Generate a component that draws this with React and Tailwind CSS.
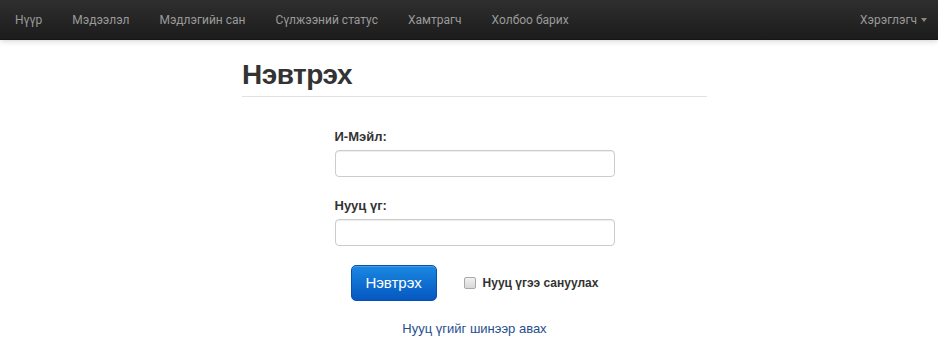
import React from "react";

const navItems = [
	"Нүүр",
	"Мэдээлэл",
	"Мэдлэгийн сан",
	"Сүлжээний статус",
	"Хамтрагч",
	"Холбоо барих",
];

function Navbar() {
	return (
		<div className="h-[40px] flex items-center justify-between bg-gradient-to-b from-[#2f2f2f] to-[#1c1c1c] border-b border-[#161616] shadow-[0_1px_6px_rgba(0,0,0,0.18)] font-['Roboto',sans-serif] text-[12px] text-[#9a9a9a]">
			<ul className="flex h-full items-center">
				{navItems.map((item) => (
					<li key={item} className="px-[15px] leading-[40px]">
						{item}
					</li>
				))}
			</ul>
			<div className="flex items-center pr-[11px]">
				<span>Хэрэглэгч</span>
				{/* caret */}
				<span className="ml-[4px] w-0 h-0 border-l-[3px] border-r-[3px] border-t-[4px] border-l-transparent border-r-transparent border-t-[#888] mt-[1px]" />
			</div>
		</div>
	);
}

function LoginForm() {
	return (
		<div className="w-[280px] mx-auto mt-[30px]">
			<label className="block text-[13px] leading-[20px] font-bold text-[#333] mb-[3px]">
				И-Мэйл:
			</label>
			<input
				type="text"
				className="block w-[280px] h-[27px] border border-[#ccc] rounded-[4px] bg-white shadow-[inset_0_1px_1px_rgba(0,0,0,0.075)] outline-none"
			/>
			<label className="block text-[13px] leading-[20px] font-bold text-[#333] mt-[19px] mb-[3px]">
				Нууц үг:
			</label>
			<input
				type="password"
				className="block w-[280px] h-[27px] border border-[#ccc] rounded-[4px] bg-white shadow-[inset_0_1px_1px_rgba(0,0,0,0.075)] outline-none"
			/>

			<div className="flex items-center justify-center gap-[27px] mt-[19px]">
				<button className="w-[86px] h-[36px] rounded-[5px] bg-gradient-to-b from-[#1b88e2] to-[#0857c0] border border-[#0a4fae] text-white text-[15px] shadow-[inset_0_1px_0_rgba(255,255,255,0.2)]">
					Нэвтрэх
				</button>
				<label className="flex items-center gap-[7px] text-[12px] font-bold text-[#333]">
					<span className="w-[12px] h-[12px] rounded-[2px] border border-[#a9a9a9] bg-gradient-to-b from-[#f1f1f1] to-[#d8d8d8]" />
					Нууц үгээ сануулах
				</label>
			</div>

			<div className="text-center mt-[18px] text-[13px] leading-[20px] text-[#1f4f8e]">
				Нууц үгийг шинээр авах
			</div>
		</div>
	);
}

export default function App() {
	return (
		<div className="w-[938px] h-[361px] bg-white font-['Liberation_Sans',Arial,sans-serif] overflow-hidden">
			<Navbar />
			<div className="w-[465px] ml-[242px]">
				<div className="pt-[17px] pb-[3px] border-b border-[#e2e2e2]">
					<h1 className="text-[28px] leading-[36px] font-bold text-[#333] tracking-[-0.5px]">
						Нэвтрэх
					</h1>
				</div>
				<LoginForm />
			</div>
		</div>
	);
}
